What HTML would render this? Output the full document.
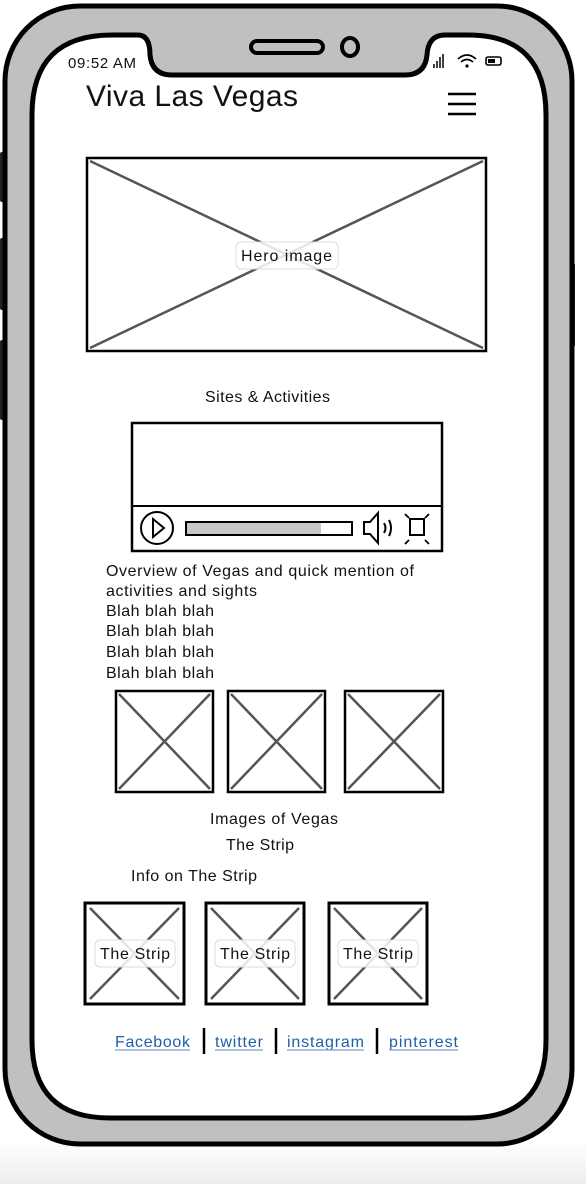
<!DOCTYPE html>
<html><head><meta charset="utf-8"><style>
html,body{margin:0;padding:0;background:#fff;width:586px;height:1184px;overflow:hidden}
svg{display:block}
text{font-family:"Liberation Sans",sans-serif;fill:#111}
</style></head><body>
<svg width="586" height="1184" viewBox="0 0 586 1184">
<defs><linearGradient id="g" x1="0" y1="0" x2="0" y2="1"><stop offset="0" stop-color="#fff"/><stop offset="1" stop-color="#eee"/></linearGradient></defs>
<rect x="0" y="1140" width="586" height="44" fill="url(#g)"/>
<rect x="0" y="152" width="8" height="50" rx="2" fill="#222"/>
<rect x="0" y="238" width="8" height="72" rx="2" fill="#222"/>
<rect x="0" y="340" width="8" height="80" rx="2" fill="#222"/>
<rect x="566" y="263" width="9" height="84" rx="2" fill="#222"/>
<rect x="5" y="6" width="567" height="1138" rx="75" fill="#c0c0c0" stroke="#000" stroke-width="5"/>
<path d="M32 115 Q32 35 112 35 L138 35 Q150 35 150 55 Q152 75 172 75 L405 75 Q425 75 427 55 Q428 35 445 35 L468 35 Q546 35 546 115 L546 1040 Q546 1118 468 1118 L110 1118 Q32 1118 32 1040 Z" fill="#fff" stroke="#000" stroke-width="5"/>
<rect x="251" y="41" width="72" height="12" rx="6" fill="none" stroke="#000" stroke-width="4"/>
<ellipse cx="350" cy="47" rx="8" ry="9" fill="none" stroke="#000" stroke-width="4"/>
<text x="68" y="68" font-size="15" textLength="68">09:52 AM</text>
<g stroke="#000" stroke-width="1.5"><line x1="434" y1="68" x2="434" y2="64"/><line x1="437" y1="68" x2="437" y2="61"/><line x1="440" y1="68" x2="440" y2="57"/><line x1="443" y1="68" x2="443" y2="54"/></g>
<path d="M458 59 Q467 51 476 59 M461 62 Q467 57 473 62" fill="none" stroke="#000" stroke-width="1.6"/><circle cx="467" cy="66" r="1.6"/>
<rect x="486" y="57" width="15" height="8" rx="2" fill="none" stroke="#000" stroke-width="1.6"/><rect x="488" y="59" width="7" height="4"/>
<text x="86" y="106" font-size="30" textLength="212">Viva Las Vegas</text>
<g stroke="#000" stroke-width="2.5"><line x1="448" y1="94" x2="476" y2="94"/><line x1="448" y1="104" x2="476" y2="104"/><line x1="448" y1="114" x2="476" y2="114"/></g>
<rect x="87" y="158" width="399" height="193" fill="#fff" stroke="#000" stroke-width="2.5"/>
<g stroke="#555" stroke-width="2.5"><line x1="90" y1="161" x2="483" y2="348"/><line x1="483" y1="161" x2="90" y2="348"/></g>
<rect x="236" y="242" width="102" height="27" rx="5" fill="#fff" fill-opacity="0.85" stroke="#ddd"/>
<text x="241" y="261" font-size="16" textLength="91">Hero image</text>
<text x="205" y="402" font-size="16" textLength="125">Sites &amp; Activities</text>
<rect x="132" y="423" width="310" height="128" fill="#fff" stroke="#000" stroke-width="2.5"/>
<line x1="132" y1="506" x2="442" y2="506" stroke="#000" stroke-width="2"/>
<circle cx="157" cy="528" r="16" fill="none" stroke="#000" stroke-width="2"/>
<path d="M153 519 L164 528 L153 537 Z" fill="none" stroke="#000" stroke-width="2"/>
<rect x="186" y="522" width="166" height="13" fill="#c8c8c8" stroke="#000" stroke-width="2"/>
<rect x="321" y="523" width="30" height="11" fill="#fff"/>
<path d="M364 522 L370 522 L378 513 L378 543 L370 534 L364 534 Z M384 523 Q387 528 384 533 M389 520 Q393 528 389 536" fill="none" stroke="#000" stroke-width="2"/>
<rect x="410" y="519" width="14" height="16" fill="none" stroke="#000" stroke-width="2"/>
<g stroke="#000" stroke-width="1.8" fill="none"><path d="M405 514 L409 518 M429 514 L425 518 M405 544 L409 540 M429 544 L425 540"/></g>
<g font-size="16"><text x="106" y="576" textLength="308">Overview of Vegas and quick mention of</text><text x="106" y="596" textLength="151">activities and sights</text><text x="106" y="616" textLength="108">Blah blah blah</text><text x="106" y="636" textLength="108">Blah blah blah</text><text x="106" y="657" textLength="108">Blah blah blah</text><text x="106" y="678" textLength="108">Blah blah blah</text></g>
<g fill="#fff" stroke="#000" stroke-width="2.5"><rect x="116" y="691" width="97" height="101"/><rect x="228" y="691" width="97" height="101"/><rect x="345" y="691" width="98" height="101"/></g>
<g stroke="#555" stroke-width="2.5"><line x1="119" y1="694" x2="210" y2="789"/><line x1="210" y1="694" x2="119" y2="789"/><line x1="231" y1="694" x2="322" y2="789"/><line x1="322" y1="694" x2="231" y2="789"/><line x1="348" y1="694" x2="440" y2="789"/><line x1="440" y1="694" x2="348" y2="789"/></g>
<text x="210" y="824" font-size="16" textLength="128">Images of Vegas</text>
<text x="226" y="850" font-size="16" textLength="68">The Strip</text>
<text x="131" y="881" font-size="16" textLength="126">Info on The Strip</text>
<g fill="#fff" stroke="#000" stroke-width="3"><rect x="85" y="903" width="99" height="101"/><rect x="206" y="903" width="98" height="101"/><rect x="329" y="903" width="98" height="101"/></g>
<g stroke="#555" stroke-width="2.5"><line x1="90" y1="908" x2="179" y2="999"/><line x1="179" y1="908" x2="90" y2="999"/><line x1="211" y1="908" x2="299" y2="999"/><line x1="299" y1="908" x2="211" y2="999"/><line x1="334" y1="908" x2="422" y2="999"/><line x1="422" y1="908" x2="334" y2="999"/></g>
<g fill="#fff" fill-opacity="0.85" stroke="#ddd"><rect x="95" y="940" width="80" height="27" rx="5"/><rect x="215" y="940" width="80" height="27" rx="5"/><rect x="338" y="940" width="80" height="27" rx="5"/></g>
<g font-size="16"><text x="100" y="959" textLength="70">The Strip</text><text x="220" y="959" textLength="70">The Strip</text><text x="343" y="959" textLength="70">The Strip</text></g>
<g font-size="16"><text x="115" y="1047" style="fill:#1f5fa8" textLength="75">Facebook</text><text x="215" y="1047" style="fill:#1f5fa8" textLength="48">twitter</text><text x="287" y="1047" style="fill:#1f5fa8" textLength="77">instagram</text><text x="389" y="1047" style="fill:#1f5fa8" textLength="69">pinterest</text></g>
<g stroke="#7aa3d1" stroke-width="1.2"><line x1="115" y1="1050" x2="190" y2="1050"/><line x1="215" y1="1050" x2="263" y2="1050"/><line x1="287" y1="1050" x2="364" y2="1050"/><line x1="389" y1="1050" x2="458" y2="1050"/></g>
<g stroke="#000" stroke-width="2.5"><line x1="204" y1="1028" x2="204" y2="1054"/><line x1="276" y1="1028" x2="276" y2="1054"/><line x1="377" y1="1028" x2="377" y2="1054"/></g>
</svg>
</body></html>
